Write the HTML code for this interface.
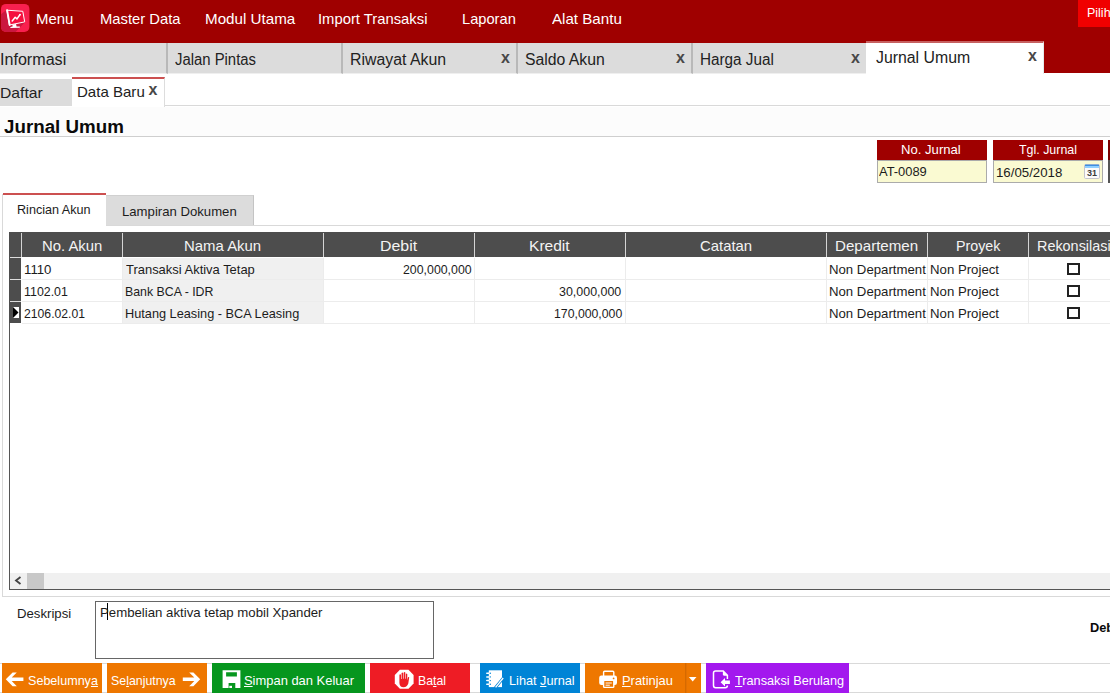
<!DOCTYPE html>
<html><head><meta charset="utf-8">
<style>
*{box-sizing:border-box;margin:0;padding:0}
html,body{width:1110px;height:696px;overflow:hidden;background:#fff;font-family:"Liberation Sans",sans-serif;color:#1a1a1a}
.abs{position:absolute}
.t{position:absolute;white-space:nowrap;transform-origin:0 0}
#top{position:absolute;left:0;top:0;width:1110px;height:73px;background:#9f0000}
.tab{position:absolute;top:43px;height:31px;background:#dcdcdc;border-right:2px solid #b8b8b8;border-bottom:1px solid #efefef}
.hl{position:absolute;height:1px;background:#d9d9d9}
.vl{position:absolute;width:1px;background:#d9d9d9}
.fh{position:absolute;top:140px;height:20px;background:#9f0000}
.fi{position:absolute;top:160px;height:23px;background:#fafad2;border:1px solid #ababab}
.gs{position:absolute;top:233px;height:24px;width:1px;background:#d4d4d4}
.row{position:absolute;left:22px;width:1088px;height:22px;border-bottom:1px solid #ececec}
.c{position:absolute;top:0;height:21px;border-right:1px solid #ececec}
.cb{position:absolute;left:1045px;top:5px;width:13px;height:12px;border:2px solid #222;background:#fff}
.btn{position:absolute;top:663px;height:30px}
u{text-decoration-thickness:1px;text-underline-offset:1px}
</style></head><body>
<div id="top">
 <svg class="abs" style="left:0;top:2px" width="32" height="32" viewBox="0 2 32 32">
  <defs><clipPath id="lg"><rect x="1" y="3.9" width="28.4" height="28" rx="5"/></clipPath></defs>
  <rect x="1" y="3.9" width="28.4" height="28" rx="5" fill="#f8204e"/>
  <g clip-path="url(#lg)">
   <path d="M6.4 10 L1 14.2 L1 32 L15.6 32 L19.8 27.4 L25 22.2 Z" fill="#cb173f"/>
  </g>
  <path d="M6.9 10.2 L22.8 11.3 L24.7 21.9 L9.4 25 Z" fill="#f5103f" stroke="#fff" stroke-width="1" stroke-linejoin="round"/>
  <path d="M7.1 10.2 L9.7 25" fill="none" stroke="#fff" stroke-width="1.9" stroke-linecap="round"/>
  <path d="M12.2 21 L15.2 17.3 L17 18.9 L19.9 14.8" fill="none" stroke="#fff" stroke-width="1.5" stroke-linecap="round" stroke-linejoin="round"/>
  <circle cx="20" cy="14.6" r="0.9" fill="#fff"/>
  <path d="M12.4 24.6 L16 24 L16.6 26.4 L19.8 26.6 L19.8 27.7 L10.4 27.9 L10.4 27 L12.6 26.4 Z" fill="#fff"/>
 </svg>
 <div class="abs" style="left:1078px;top:0;width:32px;height:27px;background:#f00000"></div>
</div>
<div class="tab" style="left:0;width:168px"></div>
<div class="tab" style="left:168px;width:175px"></div>
<div class="tab" style="left:343px;width:175px"></div>
<div class="tab" style="left:518px;width:175px"></div>
<div class="tab" style="left:693px;width:175px;border-right:0"></div>
<div class="abs" style="left:866px;top:41px;width:178px;height:33px;background:#fff;border-top:2px solid #c66060;border-right:1px solid #e4ecec"></div>

<!-- sub tabs -->
<div class="abs" style="left:0;top:79px;width:72px;height:27px;background:#dcdcdc"></div>
<div class="abs" style="left:72px;top:77px;width:93px;height:30px;background:#fff;border-top:2px solid #cc5050;border-right:1px solid #ddd"></div>
<div class="hl" style="left:165px;top:105px;width:945px"></div>
<div class="abs" style="left:0;top:107px;width:1110px;height:29px;background:#fcfcfc"></div>
<div class="hl" style="left:0;top:136px;width:1110px;background:#cfcfcf"></div>

<!-- fields -->
<div class="fh" style="left:877px;width:110px"></div>
<div class="fi" style="left:877px;width:110px"></div>
<div class="fh" style="left:993px;width:110px"></div>
<div class="fi" style="left:993px;width:110px"></div>
<svg class="abs" style="left:1084px;top:164px" width="16" height="15" viewBox="0 0 16 15">
 <rect x="0.5" y="0.5" width="15" height="14" rx="1.2" fill="#fbfbfb" stroke="#c4c4cc"/>
 <rect x="1" y="0.6" width="14" height="1.4" fill="#3d8fe0"/>
 <rect x="1" y="2" width="14" height="2" fill="#8fcfff"/>
 <text x="8" y="12.3" style="font-family:'Liberation Sans',sans-serif;font-size:9px;font-weight:bold" text-anchor="middle" fill="#3a3a3a">31</text>
</svg>
<div class="abs" style="left:1108px;top:140px;width:2px;height:20px;background:#7a0000"></div><div class="abs" style="left:1108px;top:160px;width:2px;height:23px;background:#555"></div>

<!-- inner tabs -->
<div class="hl" style="left:2px;top:225px;width:1108px"></div>
<div class="vl" style="left:2px;top:194px;height:403px"></div>
<div class="hl" style="left:2px;top:596px;width:1108px"></div>
<div class="abs" style="left:3px;top:193px;width:103px;height:34px;background:#fff;border-top:2px solid #cc5050"></div>
<div class="abs" style="left:106px;top:195px;width:148px;height:30px;background:#dcdcdc;border-right:1px solid #c4c4c4;border-top:1px solid #d0d0d0"></div>

<!-- grid -->
<div class="abs" style="left:9px;top:232px;width:1101px;height:358px;border-left:1px solid #555;border-bottom:1px solid #555"></div>
<div class="abs" style="left:9px;top:232px;width:1101px;height:25px;background:#4d4d4d"></div>
<div class="abs" style="left:9px;top:257px;width:12px;height:66px;background:#4d4d4d"></div>
<div class="hl" style="left:10px;top:257px;width:11px;background:#ddd"></div>
<div class="gs" style="left:21px"></div>
<div class="gs" style="left:122px"></div>
<div class="gs" style="left:323px"></div>
<div class="gs" style="left:474px"></div>
<div class="gs" style="left:625px"></div>
<div class="gs" style="left:826px"></div>
<div class="gs" style="left:927px"></div>
<div class="gs" style="left:1028px"></div>

<div class="row" style="top:258px">
 <div class="c" style="left:0;width:101px"></div>
 <div class="c" style="left:101px;width:201px;background:#f0f0f0"></div>
 <div class="c" style="left:302px;width:151px"></div>
 <div class="c" style="left:453px;width:151px"></div>
 <div class="c" style="left:604px;width:201px"></div>
 <div class="c" style="left:805px;width:101px"></div>
 <div class="c" style="left:906px;width:101px"></div>
 <div class="cb"></div>
</div>
<div class="row" style="top:280px">
 <div class="c" style="left:0;width:101px"></div>
 <div class="c" style="left:101px;width:201px;background:#f0f0f0"></div>
 <div class="c" style="left:302px;width:151px"></div>
 <div class="c" style="left:453px;width:151px"></div>
 <div class="c" style="left:604px;width:201px"></div>
 <div class="c" style="left:805px;width:101px"></div>
 <div class="c" style="left:906px;width:101px"></div>
 <div class="cb"></div>
</div>
<div class="row" style="top:302px">
 <div class="c" style="left:0;width:101px"></div>
 <div class="c" style="left:101px;width:201px;background:#f0f0f0"></div>
 <div class="c" style="left:302px;width:151px"></div>
 <div class="c" style="left:453px;width:151px"></div>
 <div class="c" style="left:604px;width:201px"></div>
 <div class="c" style="left:805px;width:101px"></div>
 <div class="c" style="left:906px;width:101px"></div>
 <div class="cb"></div>
</div>
<div class="hl" style="left:10px;top:279px;width:11px;background:#ddd"></div>
<div class="hl" style="left:10px;top:301px;width:11px;background:#ddd"></div>
<svg class="abs" style="left:13px;top:307px" width="6" height="11" viewBox="0 0 6 11"><rect width="6" height="11" fill="#fff"/><path d="M0 0 L5.5 5.5 L0 11Z" fill="#000"/></svg>

<!-- scrollbar -->
<div class="abs" style="left:10px;top:573px;width:1100px;height:16px;background:#f0f0f0"></div>
<div class="abs" style="left:27px;top:573px;width:17px;height:16px;background:#c8c8c8"></div>
<svg class="abs" style="left:14px;top:576px" width="8" height="9" viewBox="0 0 8 9"><path d="M6.5 1 L2 4.5 L6.5 8" fill="none" stroke="#444" stroke-width="1.8"/></svg>

<!-- description -->
<div class="abs" style="left:95px;top:601px;width:339px;height:58px;border:1px solid #666;background:#fff"></div>
<div class="abs" style="left:107px;top:603px;width:1px;height:17px;background:#000"></div>

<!-- buttons -->
<div class="hl" style="left:0;top:663px;width:1110px"></div>
<div class="hl" style="left:0;top:692px;width:1110px"></div>
<div class="btn" style="left:2px;width:100px;background:#ee7700"></div>
<div class="btn" style="left:107px;width:100px;background:#ee7700"></div>
<div class="btn" style="left:212px;width:153px;background:#06961e"></div>
<div class="btn" style="left:370px;width:100px;background:#ee1c25"></div>
<div class="btn" style="left:480px;width:100px;background:#0084d6"></div>
<div class="btn" style="left:585px;width:116px;background:#ee7700"></div>
<div class="btn" style="left:706px;width:143px;background:#a318ee"></div>

<!-- icons -->
<svg class="abs" style="left:0;top:663px" width="1110" height="30" viewBox="0 663 1110 30">
 <!-- left arrow -->
 <path d="M23.4 677.6 H11.7 L16.8 672.5 H12.6 L5.8 679.3 L12.6 686.2 H16.8 L11.7 681 H23.4 Z" fill="#fff"/>
 <!-- right arrow -->
 <path d="M182.8 677.6 H194.3 L189.2 672.5 H193.4 L200.2 679.3 L193.4 686.2 H189.2 L194.3 681 H182.8 Z" fill="#fff"/>
 <!-- floppy -->
 <path d="M222.6 670.3 H240.4 V688 H235.3 V682.9 H228.6 V688 H222.6 Z M226.1 672.3 V676.4 H236.9 V672.3 Z" fill="#fff" fill-rule="evenodd"/>
 <rect x="229.3" y="685.8" width="2.7" height="2.2" fill="#fff"/>
 <!-- stop hand -->
 <path d="M399.9 669.8 H408.5 L413.6 675 V683.6 L408.5 688.8 H399.9 L394.8 683.6 V675 Z" fill="#fff"/>
 <g transform="translate(404.2 679.6) scale(-1.14 1.1) translate(-403.6 -679.4)"><path d="M399.2 677.2 L400.2 677 L400.9 680 V674.2 Q401.5 673.4 402.1 674.2 V678.6 H402.6 V673 Q403.3 672.2 404 673 V678.6 H404.5 V673.4 Q405.2 672.6 405.9 673.4 V678.8 H406.4 V675 Q407.1 674.2 407.8 675 V682.5 Q407.6 686.3 404.2 686.3 Q401 686.3 400 683 Z" fill="#ee1c25"/></g>
 <!-- notebook -->
 <rect x="488.8" y="670.3" width="13.2" height="16.8" fill="#fff"/>
 <g stroke="#fff" stroke-width="1.5" stroke-linecap="round"><path d="M486.8 673.2 H490 M486.8 676.9 H490 M486.8 680.6 H490 M486.8 684.3 H490"/></g>
 <g fill="#0084d6"><circle cx="490.3" cy="673.2" r="0.7"/><circle cx="490.3" cy="676.9" r="0.7"/><circle cx="490.3" cy="680.6" r="0.7"/><circle cx="490.3" cy="684.3" r="0.7"/></g>
 <path d="M495 688.2 L503.6 677.6" stroke="#0084d6" stroke-width="2.9"/>
 <path d="M495.6 687.4 L503.2 678" stroke="#fff" stroke-width="1.3"/>
 <!-- printer -->
 <rect x="603.6" y="671.2" width="10.2" height="6" rx="1" fill="none" stroke="#fff" stroke-width="1.4"/>
 <rect x="599.2" y="675.6" width="17.8" height="9.4" rx="2.2" fill="#fff"/>
 <circle cx="613.6" cy="678.4" r="0.9" fill="#ee7700"/>
 <rect x="603.6" y="680.4" width="10.2" height="7" rx="0.8" fill="#ee7700" stroke="#fff" stroke-width="1.4"/>
 <path d="M605.6 683 H611.8 M605.6 685.2 H609.8" stroke="#fff" stroke-width="1"/>
 <!-- dropdown -->
 <rect x="685" y="663" width="1.4" height="30" fill="#d66a00"/>
 <path d="M688.9 677 H696.5 L692.7 681.4 Z" fill="#fff"/>
 <!-- doc -->
 <path d="M727.4 679 V675.4 L723.2 670.9 H715.6 Q713.5 670.9 713.5 673 V685.6 Q713.5 687.7 715.6 687.7 H725.3 Q727.4 687.7 727.4 685.6 V685.4" fill="none" stroke="#fff" stroke-width="1.5"/>
 <path d="M722.9 671 V674.2 Q722.9 675.7 724.4 675.7 H727.3 Z" fill="#fff"/>
 <path d="M720.6 682.2 L725 678 V680.5 H729.9 V684 H725 V686.4 Z" fill="#fff"/>
</svg>
<div class="t" id="m1" style="left:35.50px;top:9.80px;font-size:15px;line-height:18px;color:#fff;letter-spacing:0.000px;transform:scaleX(0.9947);">Menu</div>
<div class="t" id="m2" style="left:100.00px;top:9.80px;font-size:15px;line-height:18px;color:#fff;letter-spacing:0.000px;transform:scaleX(0.9852);">Master Data</div>
<div class="t" id="m3" style="left:204.50px;top:9.80px;font-size:15px;line-height:18px;color:#fff;letter-spacing:0.000px;transform:scaleX(1.0114);">Modul Utama</div>
<div class="t" id="m4" style="left:318.00px;top:9.80px;font-size:15px;line-height:18px;color:#fff;letter-spacing:0.000px;transform:scaleX(0.9872);">Import Transaksi</div>
<div class="t" id="m5" style="left:461.50px;top:9.80px;font-size:15px;line-height:18px;color:#fff;letter-spacing:0.000px;transform:scaleX(0.9776);">Laporan</div>
<div class="t" id="m6" style="left:552.00px;top:9.80px;font-size:15px;line-height:18px;color:#fff;letter-spacing:0.000px;transform:scaleX(1.0088);">Alat Bantu</div>
<div class="t" id="m7" style="left:1086.50px;top:4.50px;font-size:13px;line-height:16px;color:#fff;letter-spacing:0.000px;transform:scaleX(0.9600);">Pilih</div>
<div class="t" id="t1" style="left:0.00px;top:50.16px;font-size:16px;line-height:19px;color:#222;letter-spacing:0.000px;transform:scaleX(1.0063);">Informasi</div>
<div class="t" id="t2" style="left:175.00px;top:50.16px;font-size:16px;line-height:19px;color:#222;letter-spacing:0.000px;transform:scaleX(0.9288);">Jalan Pintas</div>
<div class="t" id="t3" style="left:350.00px;top:50.16px;font-size:16px;line-height:19px;color:#222;letter-spacing:0.000px;transform:scaleX(0.9916);">Riwayat Akun</div>
<div class="t" id="t4" style="left:524.50px;top:50.16px;font-size:16px;line-height:19px;color:#222;letter-spacing:0.000px;transform:scaleX(0.9852);">Saldo Akun</div>
<div class="t" id="t5" style="left:699.50px;top:50.16px;font-size:16px;line-height:19px;color:#222;letter-spacing:0.000px;transform:scaleX(0.9547);">Harga Jual</div>
<div class="t" id="t6" style="left:876.00px;top:48.16px;font-size:16px;line-height:19px;color:#222;letter-spacing:0.000px;transform:scaleX(0.9894);">Jurnal Umum</div>
<div class="t" id="x3" style="left:501.00px;top:47.96px;font-size:16px;line-height:19px;color:#484848;letter-spacing:0.000px;font-weight:bold;">x</div>
<div class="t" id="x4" style="left:676.00px;top:47.96px;font-size:16px;line-height:19px;color:#484848;letter-spacing:0.000px;font-weight:bold;">x</div>
<div class="t" id="x5" style="left:851.00px;top:47.96px;font-size:16px;line-height:19px;color:#484848;letter-spacing:0.000px;font-weight:bold;">x</div>
<div class="t" id="x6" style="left:1028.00px;top:45.96px;font-size:16px;line-height:19px;color:#484848;letter-spacing:0.000px;font-weight:bold;">x</div>
<div class="t" id="s1" style="left:-0.00px;top:84.30px;font-size:15px;line-height:18px;color:#222;letter-spacing:0.000px;transform:scaleX(1.0451);">Daftar</div>
<div class="t" id="s2" style="left:77.00px;top:82.50px;font-size:15px;line-height:18px;color:#222;letter-spacing:0.000px;transform:scaleX(1.0031);">Data Baru</div>
<div class="t" id="xs" style="left:148.50px;top:79.96px;font-size:16px;line-height:19px;color:#484848;letter-spacing:0.000px;font-weight:bold;">x</div>
<div class="t" id="title" style="left:4.00px;top:115.53px;font-size:18.67px;line-height:22px;color:#0a0a0a;letter-spacing:0.000px;transform:scaleX(1.0051);font-weight:bold;">Jurnal Umum</div>
<div class="t" id="f1" style="left:901.00px;top:142.38px;font-size:13.33px;line-height:16px;color:#fff;letter-spacing:0.000px;transform:scaleX(0.9836);">No. Jurnal</div>
<div class="t" id="f2" style="left:879.00px;top:164.38px;font-size:13.33px;line-height:16px;color:#1c1c1c;letter-spacing:0.000px;transform:scaleX(0.9675);">AT-0089</div>
<div class="t" id="f3" style="left:1019.00px;top:142.38px;font-size:13.33px;line-height:16px;color:#fff;letter-spacing:0.000px;transform:scaleX(0.9313);">Tgl. Jurnal</div>
<div class="t" id="f4" style="left:996.00px;top:165.38px;font-size:13.33px;line-height:16px;color:#1c1c1c;letter-spacing:0.000px;transform:scaleX(0.9939);">16/05/2018</div>
<div class="t" id="i1" style="left:17.00px;top:201.88px;font-size:13.33px;line-height:16px;color:#1c1c1c;letter-spacing:0.000px;transform:scaleX(0.9457);">Rincian Akun</div>
<div class="t" id="i2" style="left:122.00px;top:203.88px;font-size:13.33px;line-height:16px;color:#1c1c1c;letter-spacing:0.000px;transform:scaleX(0.9861);">Lampiran Dokumen</div>
<div class="t" id="h1" style="left:42.00px;top:236.80px;font-size:15px;line-height:18px;color:#f4f4f4;letter-spacing:0.000px;transform:scaleX(0.9899);">No. Akun</div>
<div class="t" id="h2" style="left:183.50px;top:236.80px;font-size:15px;line-height:18px;color:#f4f4f4;letter-spacing:0.000px;transform:scaleX(0.9949);">Nama Akun</div>
<div class="t" id="h3" style="left:380.00px;top:236.80px;font-size:15px;line-height:18px;color:#f4f4f4;letter-spacing:0.000px;transform:scaleX(1.0588);">Debit</div>
<div class="t" id="h4" style="left:529.00px;top:236.80px;font-size:15px;line-height:18px;color:#f4f4f4;letter-spacing:0.000px;transform:scaleX(1.0371);">Kredit</div>
<div class="t" id="h5" style="left:699.50px;top:236.80px;font-size:15px;line-height:18px;color:#f4f4f4;letter-spacing:0.000px;transform:scaleX(0.9923);">Catatan</div>
<div class="t" id="h6" style="left:835.00px;top:236.80px;font-size:15px;line-height:18px;color:#f4f4f4;letter-spacing:0.000px;transform:scaleX(1.0075);">Departemen</div>
<div class="t" id="h7" style="left:956.00px;top:236.80px;font-size:15px;line-height:18px;color:#f4f4f4;letter-spacing:0.000px;transform:scaleX(0.9514);">Proyek</div>
<div class="t" id="h8" style="left:1037.00px;top:236.80px;font-size:15px;line-height:18px;color:#f4f4f4;letter-spacing:0.000px;transform:scaleX(0.9600);">Rekonsilasi</div>
<div class="t" id="r0a" style="left:24.00px;top:262.38px;font-size:13.33px;line-height:16px;color:#1c1c1c;letter-spacing:0.000px;transform:scaleX(0.9929);">1110</div>
<div class="t" id="r0b" style="left:125.50px;top:262.38px;font-size:13.33px;line-height:16px;color:#1c1c1c;letter-spacing:0.000px;transform:scaleX(0.9715);">Transaksi Aktiva Tetap</div>
<div class="t" id="r0d" style="left:402.50px;top:262.38px;font-size:13.33px;line-height:16px;color:#1c1c1c;letter-spacing:0.000px;transform:scaleX(0.9262);">200,000,000</div>
<div class="t" id="r0e" style="left:828.50px;top:262.38px;font-size:13.33px;line-height:16px;color:#1c1c1c;letter-spacing:0.000px;transform:scaleX(0.9900);width:98.50px;overflow:hidden;">Non Department</div>
<div class="t" id="r0f" style="left:929.50px;top:262.38px;font-size:13.33px;line-height:16px;color:#1c1c1c;letter-spacing:0.000px;transform:scaleX(0.9913);">Non Project</div>
<div class="t" id="r1a" style="left:24.00px;top:284.38px;font-size:13.33px;line-height:16px;color:#1c1c1c;letter-spacing:0.000px;transform:scaleX(0.9306);">1102.01</div>
<div class="t" id="r1b" style="left:124.50px;top:284.38px;font-size:13.33px;line-height:16px;color:#1c1c1c;letter-spacing:0.000px;transform:scaleX(0.9256);">Bank BCA - IDR</div>
<div class="t" id="r1k" style="left:559.00px;top:284.38px;font-size:13.33px;line-height:16px;color:#1c1c1c;letter-spacing:0.000px;transform:scaleX(0.9335);">30,000,000</div>
<div class="t" id="r1e" style="left:828.50px;top:284.38px;font-size:13.33px;line-height:16px;color:#1c1c1c;letter-spacing:0.000px;transform:scaleX(0.9900);width:98.50px;overflow:hidden;">Non Department</div>
<div class="t" id="r1f" style="left:929.50px;top:284.38px;font-size:13.33px;line-height:16px;color:#1c1c1c;letter-spacing:0.000px;transform:scaleX(0.9913);">Non Project</div>
<div class="t" id="r2a" style="left:24.00px;top:306.38px;font-size:13.33px;line-height:16px;color:#1c1c1c;letter-spacing:0.000px;transform:scaleX(0.9152);">2106.02.01</div>
<div class="t" id="r2b" style="left:124.50px;top:306.38px;font-size:13.33px;line-height:16px;color:#1c1c1c;letter-spacing:0.000px;transform:scaleX(0.9558);">Hutang Leasing - BCA Leasing</div>
<div class="t" id="r2k" style="left:553.50px;top:306.38px;font-size:13.33px;line-height:16px;color:#1c1c1c;letter-spacing:0.000px;transform:scaleX(0.9206);">170,000,000</div>
<div class="t" id="r2e" style="left:828.50px;top:306.38px;font-size:13.33px;line-height:16px;color:#1c1c1c;letter-spacing:0.000px;transform:scaleX(0.9900);width:98.50px;overflow:hidden;">Non Department</div>
<div class="t" id="r2f" style="left:929.50px;top:306.38px;font-size:13.33px;line-height:16px;color:#1c1c1c;letter-spacing:0.000px;transform:scaleX(0.9913);">Non Project</div>
<div class="t" id="d1" style="left:17.00px;top:606.38px;font-size:13.33px;line-height:16px;color:#1c1c1c;letter-spacing:0.000px;transform:scaleX(0.9892);">Deskripsi</div>
<div class="t" id="d2" style="left:100.00px;top:605.38px;font-size:13.33px;line-height:16px;color:#1c1c1c;letter-spacing:0.000px;transform:scaleX(0.9911);">Pembelian aktiva tetap mobil Xpander</div>
<div class="t" id="d3" style="left:1089.50px;top:619.88px;font-size:13.33px;line-height:16px;color:#0a0a0a;letter-spacing:0.000px;transform:scaleX(0.9600);font-weight:bold;">Debit</div>
<div class="t" id="b1" style="left:28.00px;top:673.18px;font-size:13.33px;line-height:16px;color:#fff;letter-spacing:0.000px;transform:scaleX(0.9435);">Sebelumny<u>a</u></div>
<div class="t" id="b2" style="left:111.00px;top:673.18px;font-size:13.33px;line-height:16px;color:#fff;letter-spacing:0.000px;transform:scaleX(0.9275);">Se<u>l</u>anjutnya</div>
<div class="t" id="b3" style="left:244.00px;top:672.58px;font-size:13.33px;line-height:16px;color:#fff;letter-spacing:0.000px;transform:scaleX(0.9700);"><u>S</u>impan dan Keluar</div>
<div class="t" id="b4" style="left:418.00px;top:673.38px;font-size:13.33px;line-height:16px;color:#fff;letter-spacing:0.000px;transform:scaleX(0.9245);">Ba<u>t</u>al</div>
<div class="t" id="b5" style="left:509.00px;top:673.38px;font-size:13.33px;line-height:16px;color:#fff;letter-spacing:0.000px;transform:scaleX(0.9532);">Lihat <u>J</u>urnal</div>
<div class="t" id="b6" style="left:621.50px;top:673.38px;font-size:13.33px;line-height:16px;color:#fff;letter-spacing:0.000px;transform:scaleX(0.9687);"><u>P</u>ratinjau</div>
<div class="t" id="b7" style="left:734.50px;top:672.98px;font-size:13.33px;line-height:16px;color:#fff;letter-spacing:0.000px;transform:scaleX(0.9540);"><u>T</u>ransaksi Berulang</div>
</body></html>
